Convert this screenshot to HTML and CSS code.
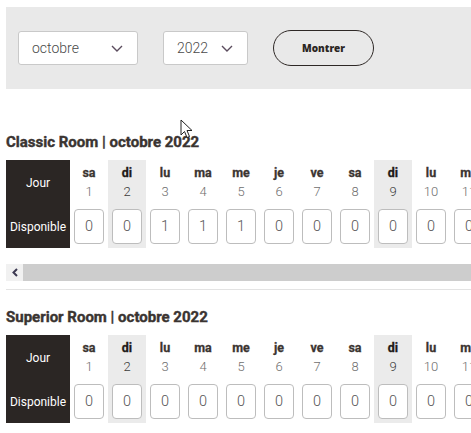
FILE: index.html
```html
<!DOCTYPE html>
<html lang="fr">
<head>
<meta charset="utf-8">
<link rel="stylesheet" href="styles.css">
</head>
<body>
<div class="page">
  <div class="filter">
    <div class="select month"><span>octobre</span><svg class="chev" width="12" height="7" viewBox="0 0 12 7"><path d="M1 1 L6 6 L11 1" fill="none" stroke="#5b4c5e" stroke-width="1.4"/></svg></div>
    <div class="select year"><span>2022</span><svg class="chev" width="12" height="7" viewBox="0 0 12 7"><path d="M1 1 L6 6 L11 1" fill="none" stroke="#5b4c5e" stroke-width="1.4"/></svg></div>
    <button class="btn">Montrer</button>
  </div>

  <h2 class="title t1">Classic Room | octobre 2022</h2>
  <div class="wrap">
    <div class="grid" id="g1"></div>
  </div>
  <div class="scrollbar"><div class="sb-btn"><svg width="8" height="9" viewBox="0 0 8 9"><path d="M6 1 L2.5 4.5 L6 8" fill="none" stroke="#3d3a52" stroke-width="2"/></svg></div><div class="sb-track"></div></div>
  <div class="sep"></div>

  <h2 class="title t2">Superior Room | octobre 2022</h2>
  <div class="wrap">
    <div class="grid" id="g2"></div>
  </div>

  <svg class="cursor" width="14" height="20" viewBox="0 0 14 20"><path d="M1 1 L1 16 L4.5 12.5 L7 18.5 L9.5 17.5 L7 11.5 L12 11.5 Z" fill="#fff" stroke="#222" stroke-width="1"/></svg>
</div>
<script>
(function(){
  var names=["sa","di","lu","ma","me","je","ve"];
  function build(id, vals){
    var g=document.getElementById(id);
    var h='<div class="head jour">Jour</div>';
    for(var d=1; d<=31; d++){
      var n=names[(d-1)%7];
      var sun=(n==="di")?" sun":"";
      h+='<div class="day'+sun+'"><div class="dn">'+n+'</div><div class="num">'+d+'</div></div>';
    }
    h+='<div class="head dispo">Disponible</div>';
    for(var d=1; d<=31; d++){
      var n=names[(d-1)%7];
      var sun=(n==="di")?" sun":"";
      h+='<div class="cell'+sun+'"><div class="inp">'+(vals[d-1]||0)+'</div></div>';
    }
    g.innerHTML=h;
  }
  build("g1",[0,0,1,1,1,0,0,0,0,0,0]);
  build("g2",[]);
})();
</script>
</body>
</html>
```
FILE: styles.css
```css
html, body { margin: 0; padding: 0; background: #fff; }
body { font-family: Roboto, "Liberation Sans", sans-serif; width: 471px; overflow: hidden; }
.page { position: relative; padding: 7px 0 0 6px; }

.filter {
  background: #e9e9e9;
  height: 82px;
  box-sizing: border-box;
  padding: 24px 0 0 12px;
  display: flex;
  align-items: flex-start;
  gap: 25px;
}
.select {
  height: 34px;
  box-sizing: border-box;
  background: #fff;
  border: 1px solid #c9c9c9;
  border-radius: 3px;
  display: flex;
  align-items: center;
  justify-content: space-between;
  padding: 0 14px 0 13px;
  font-size: 14px;
  font-weight: 300;
  color: #4a4a4a;
}
.month { width: 120px; }
.year { width: 85px; padding-left: 13px; padding-right: 14px; }
.chev { display: block; }
.btn {
  margin-top: -1px;
  width: 101px;
  height: 36px;
  border: 1.5px solid #2e2826;
  border-radius: 18px;
  background: transparent;
  font-family: "Open Sans", Lato, sans-serif;
  font-weight: 800;
  font-size: 10px;
  color: #2b2522;
  padding: 0;
}

.title {
  margin: 0;
  font-size: 15px;
  line-height: 18px;
  font-weight: 700;
  color: #3a3431;
  letter-spacing: 0;
  -webkit-text-stroke: 0.4px #3a3431;
}
.t1 { margin-top: 44px; margin-bottom: 9px; }
.t2 { margin-top: 18px; margin-bottom: 9px; }

.wrap { overflow: hidden; width: 465px; }
.grid {
  display: grid;
  grid-template-columns: 64px repeat(31, 38px);
  grid-template-rows: 45px 43px;
  width: max-content;
}
.head {
  background: #2b2624;
  color: #fff;
  font-size: 12px;
  display: flex;
  align-items: center;
  justify-content: center;
}
.day {
  display: flex;
  flex-direction: column;
  align-items: center;
  padding-top: 6px;
}
.dn {
  font-size: 12.5px;
  font-weight: 700;
  line-height: 14px;
  color: #3b3431;
  -webkit-text-stroke: 0.3px #3b3431;
}
.num {
  margin-top: 5px;
  font-size: 13px;
  font-weight: 300;
  line-height: 14px;
  color: #6e6e6e;
}
.sun { background: #ebebeb; }
.sun .dn { color: #1f1a18; -webkit-text-stroke-color: #1f1a18; }
.sun .num { color: #3a3a3a; }
.cell {
  display: flex;
  justify-content: center;
  padding-top: 4px;
}
.inp {
  width: 30px;
  height: 35px;
  box-sizing: border-box;
  border: 1px solid #bdbdbd;
  border-radius: 4px;
  background: #fff;
  display: flex;
  align-items: center;
  justify-content: center;
  font-size: 14.5px;
  font-weight: 300;
  color: #555;
}

.scrollbar {
  margin-top: 16px;
  height: 17px;
  display: flex;
}
.sb-btn {
  width: 17px;
  background: #f1f1f1;
  display: flex;
  align-items: center;
  justify-content: center;
}
.sb-track { flex: 1; background: #cdcdcd; }
.sep { margin-top: 8px; height: 1px; background: #e3e3e3; }

.cursor { position: absolute; left: 180px; top: 119px; }
```
